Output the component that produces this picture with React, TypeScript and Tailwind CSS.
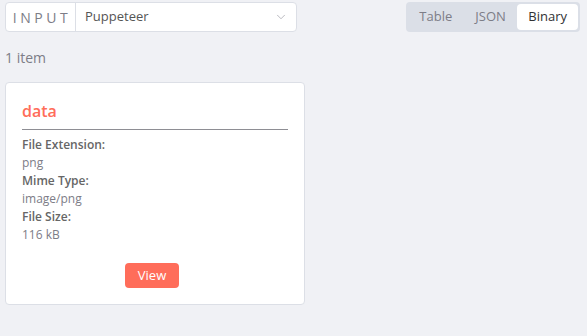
import { ChevronDown } from 'lucide-react'

const FIELDS = [
  { label: 'File Extension:', value: 'png' },
  { label: 'Mime Type:', value: 'image/png' },
  { label: 'File Size:', value: '116 kB' },
]

const TABS = ['Table', 'JSON', 'Binary']

export default function App() {
  return (
    <div className="w-[587px] h-[336px] bg-[#f0f1f5] font-['Open_Sans',sans-serif] px-[5px] pt-[2px] overflow-hidden">
      <div className="flex items-start justify-between">
        <div className="flex h-[30px] w-[292px] bg-white border border-[#dcdfe6] rounded-[4px]">
          <div className="w-[70px] flex items-center justify-center border-r border-[#dcdfe6] text-[14px] tracking-[3.5px] text-[#7d7d87] pl-[3px]">
            INPUT
          </div>
          <div className="flex-1 flex items-center justify-between pl-[9px] pr-[8px] text-[13px] text-[#555]">
            <span>Puppeteer</span>
            <ChevronDown className="w-[14px] h-[14px] text-[#a0a0a8]" strokeWidth={1.25} />
          </div>
        </div>
        <div className="flex items-center h-[30px] mr-[2px] p-[2px] bg-[#dbdfe7] rounded-[4px] text-[13px]">
          {TABS.map((t) => (
            <div
              key={t}
              className={
                t === 'Binary'
                  ? 'h-[26px] px-[11px] flex items-center bg-white rounded-[4px] text-[#303133] font-medium'
                  : 'h-[26px] px-[11.5px] flex items-center text-[#7d7d87] font-medium'
              }
            >
              {t}
            </div>
          ))}
        </div>
      </div>

      <div className="mt-[15px] text-[14px] text-[#7d7d87]">1 item</div>

      <div className="mt-[14px] w-[300px] h-[223px] bg-white border border-[#dcdfe6] rounded-[4px] pt-[16px] pl-[16px] pr-[16px] pb-[16px] flex flex-col">
        <div className="text-[16px] font-semibold text-[#ff6d5a] leading-[24px] pb-[6px] border-b border-[#8e8e94]">
          data
        </div>
        <div className="mt-[6px] text-[12px] leading-[18px]">
          {FIELDS.map((f) => (
            <div key={f.label}>
              <div className="font-semibold text-[#666]">{f.label}</div>
              <div className="text-[#7d7d87]">{f.value}</div>
            </div>
          ))}
        </div>
        <div className="mt-auto flex justify-center pr-[6px]">
          <button className="h-[25px] w-[54px] bg-[#ff6d5a] text-white text-[13px] rounded-[4px]">
            View
          </button>
        </div>
      </div>
    </div>
  )
}
